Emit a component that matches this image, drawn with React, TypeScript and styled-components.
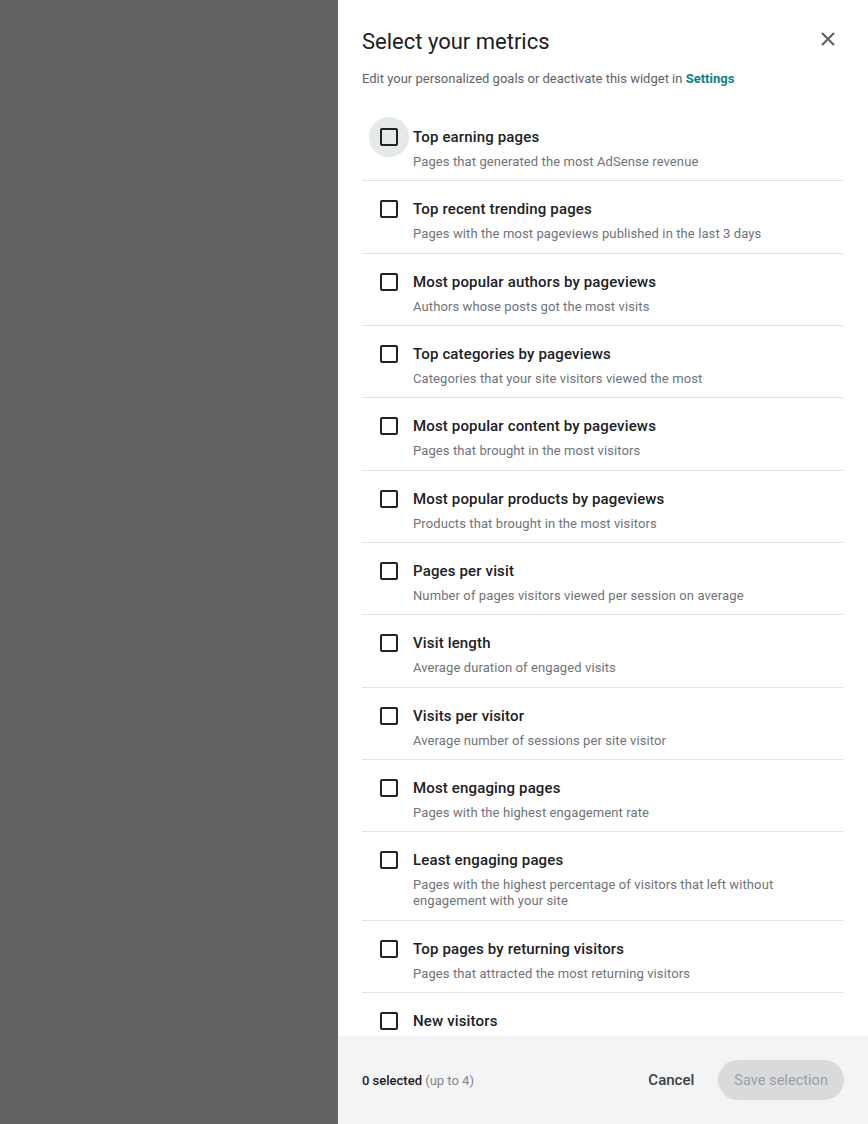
import React from "react";
import styled, { createGlobalStyle } from "styled-components";

const Global = createGlobalStyle`
  html, body { margin: 0; padding: 0; height: 100%; }
  body { font-family: Roboto, "Noto Sans", Arial, sans-serif; -webkit-font-smoothing: antialiased; }
  #root { height: 100%; }
`;

const Page = styled.div`
  display: flex;
  height: 100vh;
  width: 100vw;
  overflow: hidden;
`;

const Backdrop = styled.div`
  flex: 1;
  background: #636363;
`;

const Panel = styled.aside`
  width: 530px;
  background: #ffffff;
  display: flex;
  flex-direction: column;
  height: 100%;
`;

const Scroll = styled.div`
  flex: 1;
  overflow: hidden;
  padding: 25px 25px 0 24px;
`;

const Header = styled.div`
  display: flex;
  align-items: center;
  justify-content: space-between;
`;

const Title = styled.h1`
  margin: 0;
  font-size: 22px;
  line-height: 34px;
  font-weight: 400;
  color: #202124;
`;

const CloseButton = styled.button`
  width: 32px;
  height: 32px;
  border: 0;
  background: transparent;
  padding: 0;
  margin-right: -1px;
  margin-top: -6px;
  display: flex;
  align-items: center;
  justify-content: center;
  cursor: pointer;
`;

const Subtitle = styled.p`
  margin: 10px 0 0;
  font-size: 13px;
  line-height: 20px;
  color: #5f6368;
`;

const SettingsLink = styled.a`
  color: #108080;
  font-weight: 700;
  text-decoration: none;
`;

const List = styled.ul`
  list-style: none;
  margin: 20px 0 0;
  padding: 0;
`;

const Row = styled.li`
  display: flex;
  align-items: flex-start;
  padding: 18px 0 10.33px;
  border-bottom: 1px solid #e3e3e3;
  &:last-child { border-bottom: 0; }
`;

const BoxWrap = styled.span<{ $hover?: boolean }>`
  position: relative;
  width: 18px;
  height: 18px;
  margin: 1px 15px 0 18px;
  flex: none;
  &::before {
    content: "";
    position: absolute;
    left: -11px;
    top: -11px;
    width: 40px;
    height: 40px;
    border-radius: 50%;
    background: ${(p) => (p.$hover ? "#e5eae7" : "transparent")};
  }
`;

const Box = styled.span`
  position: absolute;
  inset: 0;
  box-sizing: border-box;
  border: 2px solid #202124;
  border-radius: 2px;
  background: transparent;
`;

const Texts = styled.div`
  display: flex;
  flex-direction: column;
  min-width: 0;
  padding-right: 60px;
`;

const ItemTitle = styled.span`
  font-size: 15px;
  line-height: 20px;
  font-weight: 500;
  color: #202124;
  letter-spacing: 0.15px;
`;

const ItemDesc = styled.span`
  margin-top: 7px;
  font-size: 13px;
  line-height: 16px;
  color: #6f7378;
  letter-spacing: 0.1px;
`;

const Footer = styled.footer`
  height: 88px;
  flex: none;
  background: #f3f4f6;
  display: flex;
  align-items: center;
  padding: 0 24px;
  gap: 8px;
`;

const Count = styled.span`
  flex: 1;
  font-size: 13px;
  font-weight: 500;
  color: #202124;
`;

const Limit = styled.span`
  font-weight: 400;
  color: #80868b;
`;

const TextButton = styled.button`
  height: 40px;
  padding: 0 16px;
  border: 0;
  background: transparent;
  font-family: inherit;
  font-size: 15px;
  font-weight: 500;
  color: #3c4043;
  cursor: pointer;
`;

const PillButton = styled.button`
  height: 40px;
  padding: 0 16px;
  border: 0;
  border-radius: 20px;
  background: #d9dadc;
  font-family: inherit;
  font-size: 14.6px;
  font-weight: 400;
  color: #9aa0a6;
`;

const metrics: [string, string?][] = [
  ["Top earning pages", "Pages that generated the most AdSense revenue"],
  ["Top recent trending pages", "Pages with the most pageviews published in the last 3 days"],
  ["Most popular authors by pageviews", "Authors whose posts got the most visits"],
  ["Top categories by pageviews", "Categories that your site visitors viewed the most"],
  ["Most popular content by pageviews", "Pages that brought in the most visitors"],
  ["Most popular products by pageviews", "Products that brought in the most visitors"],
  ["Pages per visit", "Number of pages visitors viewed per session on average"],
  ["Visit length", "Average duration of engaged visits"],
  ["Visits per visitor", "Average number of sessions per site visitor"],
  ["Most engaging pages", "Pages with the highest engagement rate"],
  ["Least engaging pages", "Pages with the highest percentage of visitors that left without engagement with your site"],
  ["Top pages by returning visitors", "Pages that attracted the most returning visitors"],
  ["New visitors"],
];

export default function App() {
  return (
    <>
      <Global />
      <Page>
        <Backdrop />
        <Panel>
          <Scroll>
            <Header>
              <Title>Select your metrics</Title>
              <CloseButton aria-label="Close">
                <svg width="16" height="16" viewBox="0 0 16 16">
                  <path d="M2 2 L14 14 M14 2 L2 14" stroke="#5f6368" strokeWidth="2.2" fill="none" />
                </svg>
              </CloseButton>
            </Header>
            <Subtitle>
              Edit your personalized goals or deactivate this widget in <SettingsLink href="#">Settings</SettingsLink>
            </Subtitle>
            <List>
              {metrics.map(([t, d], i) => (
                <Row key={t}>
                  <BoxWrap $hover={i === 0}>
                    <Box />
                  </BoxWrap>
                  <Texts>
                    <ItemTitle>{t}</ItemTitle>
                    {d && <ItemDesc>{d}</ItemDesc>}
                  </Texts>
                </Row>
              ))}
            </List>
          </Scroll>
          <Footer>
            <Count>
              0 selected <Limit>(up to 4)</Limit>
            </Count>
            <TextButton>Cancel</TextButton>
            <PillButton disabled>Save selection</PillButton>
          </Footer>
        </Panel>
      </Page>
    </>
  );
}
